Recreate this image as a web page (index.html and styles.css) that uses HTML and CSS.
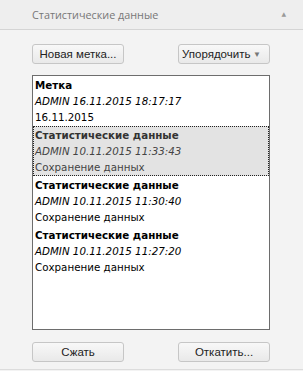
FILE: index.html
```html
<!DOCTYPE html>
<html lang="ru">
<head>
    <meta charset="UTF-8">
    <title>Статистические данные</title>
    <link rel="stylesheet" href="styles.css">
</head>
<body>
    <header class="panel-head">
        <span class="panel-title">Статистические данные</span>
        <span class="collapse">&#9650;</span>
    </header>

    <main class="panel-body">
        <div class="toolbar">
            <button class="btn">Новая метка...</button>
            <button class="btn btn-drop">Упорядочить <span class="caret">&#9660;</span></button>
        </div>

        <div class="history">
            <div class="entry">
                <div class="entry-title">Метка</div>
                <div class="entry-meta">ADMIN 16.11.2015 18:17:17</div>
                <div class="entry-note">16.11.2015</div>
            </div>
            <div class="entry selected">
                <div class="entry-title">Статистические данные</div>
                <div class="entry-meta">ADMIN 10.11.2015 11:33:43</div>
                <div class="entry-note">Сохранение данных</div>
            </div>
            <div class="entry">
                <div class="entry-title">Статистические данные</div>
                <div class="entry-meta">ADMIN 10.11.2015 11:30:40</div>
                <div class="entry-note">Сохранение данных</div>
            </div>
            <div class="entry">
                <div class="entry-title">Статистические данные</div>
                <div class="entry-meta">ADMIN 10.11.2015 11:27:20</div>
                <div class="entry-note">Сохранение данных</div>
            </div>
        </div>

        <div class="toolbar bottom">
            <button class="btn">Сжать</button>
            <button class="btn">Откатить...</button>
        </div>
    </main>
</body>
</html>
```

FILE: styles.css
```css
body {
    margin: 0;
    width: 303px;
    height: 371px;
    background-color: #f3f3f3;
    font-family: "DejaVu Sans", sans-serif;
    overflow: hidden;
}
.panel-head {
    height: 30px;
    box-sizing: border-box;
    background-color: #eeeeee;
    border-bottom: 1px solid #d4d4d4;
    display: flex;
    align-items: center;
    justify-content: space-between;
    padding: 0 17px 0 32px;
}
.panel-title {
    font-family: "Open Sans", sans-serif;
    font-size: 10.8px;
    color: #777;
}
.collapse {
    font-size: 6px;
    color: #999;
    margin-top: -2px;
}
.panel-body {
    padding: 14px 33px 0 32px;
    height: 340px;
    box-sizing: border-box;
    border-bottom: 1px solid #dcdcdc;
}
.toolbar {
    display: flex;
    justify-content: space-between;
}
.toolbar.bottom {
    margin-top: 12px;
}
.btn {
    width: 92px;
    height: 20px;
    padding: 0;
    border: 1px solid #c6c6c6;
    border-radius: 3px;
    background: linear-gradient(#f8f8f8, #e9e9e9);
    font-family: "Liberation Sans", sans-serif;
    font-size: 11.5px;
    color: #222;
}
.btn-drop {
    text-align: left;
    padding-left: 3px;
    display: flex;
    align-items: center;
}
.caret {
    font-size: 8px;
    color: #777;
    margin-left: auto;
    margin-right: 8px;
}
.history {
    margin-top: 11px;
    height: 255px;
    box-sizing: border-box;
    border: 1px solid #6d6d6d;
    background: #fff;
}
.entry {
    border: 1px dotted transparent;
    padding: 0 1px;
    font-size: 10.3px;
    line-height: 16px;
    color: #000;
}
.entry.selected {
    border-color: #222;
    background: #e3e3e3;
    color: #333;
}
.entry-title {
    font-weight: bold;
}
.entry-meta {
    font-style: italic;
}
.entry.selected .entry-note,
.entry.selected .entry-meta {
    color: #444;
}
```
